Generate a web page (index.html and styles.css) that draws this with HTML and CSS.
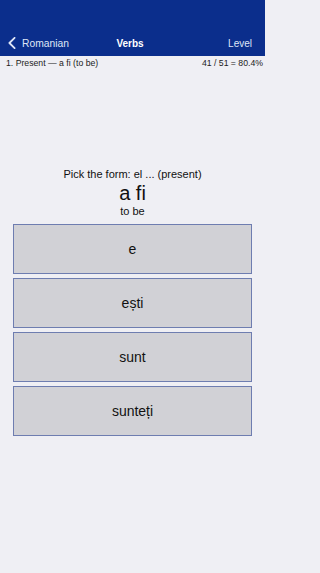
FILE: index.html
```html
<!DOCTYPE html>
<html>
<head>
<meta charset="utf-8">
<link rel="stylesheet" href="styles.css">
</head>
<body>
<header class="navbar">
  <div class="nav-row">
    <div class="nav-back">
      <svg class="chev" width="8" height="12" viewBox="0 0 8 12"><path d="M6.6 0.8 L1.4 6 L6.6 11.2" fill="none" stroke="#dfe6f7" stroke-width="1.8" stroke-linecap="round" stroke-linejoin="round"/></svg>
      <span>Romanian</span>
    </div>
    <div class="nav-title">Verbs</div>
    <div class="nav-right">Level</div>
  </div>
</header>
<div class="subbar">
  <span>1. Present — a fi (to be)</span>
  <span>41 / 51 = 80.4%</span>
</div>
<main class="quiz">
  <div class="prompt">Pick the form: el ... (present)</div>
  <div class="word">a fi</div>
  <div class="gloss">to be</div>
  <div class="options">
    <div class="option">e</div>
    <div class="option">ești</div>
    <div class="option">sunt</div>
    <div class="option">sunteți</div>
  </div>
</main>
</body>
</html>
```
FILE: styles.css
```css
html {
  margin: 0;
  padding: 0;
  background: #efeff4;
}
body {
  margin: 0;
  padding: 0;
  width: 265px;
  height: 573px;
  background: #efeff4;
  font-family: "Liberation Sans", Arial, sans-serif;
  color: #111;
  overflow: hidden;
}
.navbar {
  height: 56px;
  background: #0b2e8c;
  box-sizing: border-box;
  padding-top: 32px;
}
.nav-row {
  height: 22px;
  display: grid;
  grid-template-columns: 1fr auto 1fr;
  align-items: center;
  padding: 0 13px 0 8px;
}
.nav-back {
  display: flex;
  align-items: center;
  gap: 6px;
  color: #dfe6f7;
  font-size: 10.3px;
}
.chev {
  display: block;
}
.nav-title {
  color: #ffffff;
  font-weight: bold;
  font-size: 10px;
}
.nav-right {
  justify-self: end;
  color: #dfe6f7;
  font-size: 10px;
}
.subbar {
  display: flex;
  justify-content: space-between;
  padding: 2px 2px 0 6px;
  font-size: 8.7px;
  line-height: 11px;
  color: #222;
}
.quiz {
  padding: 98px 13px 0;
  display: flex;
  flex-direction: column;
  align-items: center;
  text-align: center;
}
.prompt {
  font-size: 11px;
  line-height: 14px;
  color: #111;
}
.word {
  font-size: 20px;
  line-height: 24px;
  color: #111;
}
.gloss {
  font-size: 11px;
  line-height: 13px;
  color: #111;
}
.options {
  margin-top: 6px;
  align-self: stretch;
  display: flex;
  flex-direction: column;
  gap: 4px;
}
.option {
  height: 50px;
  box-sizing: border-box;
  border: 1px solid #6e7db0;
  background: #d1d1d6;
  display: flex;
  align-items: center;
  justify-content: center;
  font-size: 14px;
  color: #111;
}
```
